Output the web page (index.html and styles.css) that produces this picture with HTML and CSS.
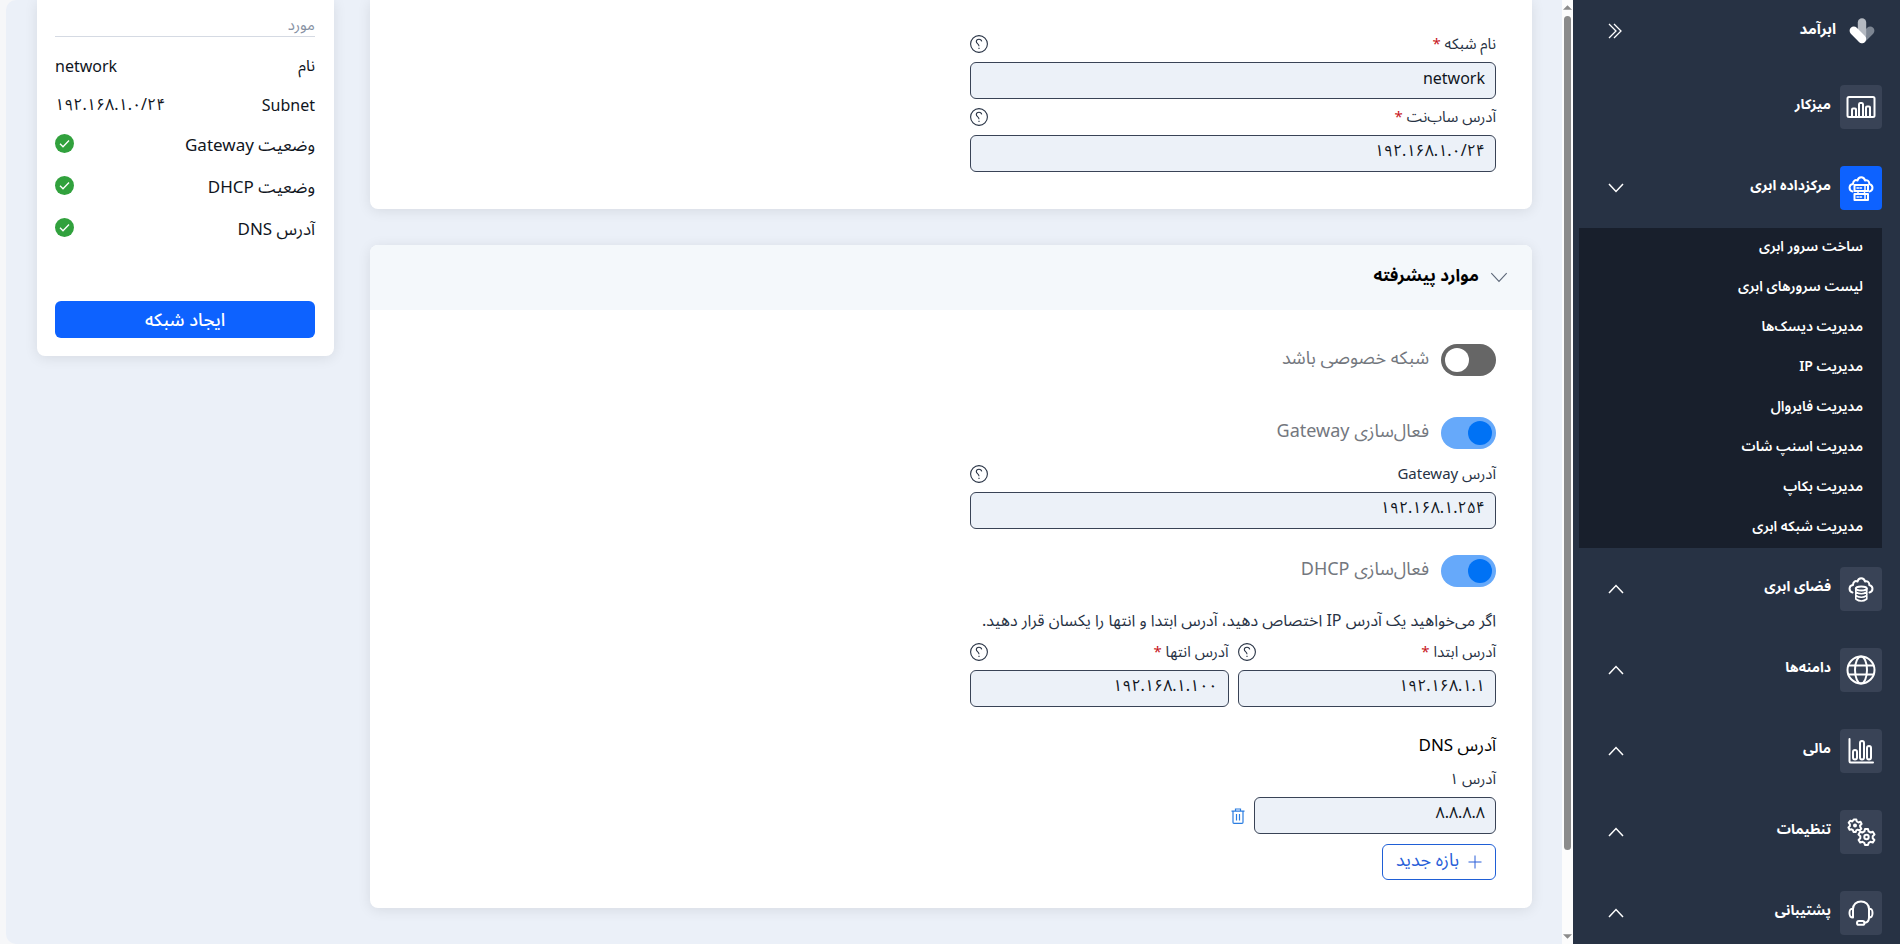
FILE: index.html
```html
<!DOCTYPE html>
<html lang="fa" dir="rtl">
<head>
    <meta charset="UTF-8">
    <meta name="viewport" content="width=device-width, initial-scale=1.0">
    <title>ایجاد شبکه | ابرآمد</title>
    <link rel="stylesheet" href="styles.css">
</head>
<body>
    <!-- shared icons -->
    <svg class="sprite" aria-hidden="true">
        <symbol id="i-help" viewBox="0 0 18 18"><circle cx="9" cy="9" r="8.4"/><path d="M11.7 6.4C11.5 5 10.300 4.200 9 4.200C7.500 4.200 6.300 5.200 6.300 6.600C6.300 8.700 9 8.600 9 11.300M9 12.800V14"/></symbol>
        <symbol id="i-up" viewBox="0 0 16 10"><path d="M1 9L8 1.500L15 9"/></symbol>
        <symbol id="i-down" viewBox="0 0 16 10"><path d="M1 1L8 8.500L15 1"/></symbol>
        <symbol id="i-check" viewBox="0 0 19 19"><circle cx="9.5" cy="9.500" r="9.500" fill="#31a13d"/><path d="M5 9.800L8 12.800L14 6.500" stroke="#fff" stroke-width="1.300"/></symbol>
    </svg>

    <div class="layout">
        <aside class="sidebar">
            <div class="brand">
                <svg class="logo" viewBox="0 0 26 26">
                    <path d="M13 21L21.200 12.800" stroke="#7c8592" stroke-width="8.400" stroke-linecap="round"/>
                    <path d="M13 4.500V17" stroke="#b4b9c1" stroke-width="8.400" stroke-linecap="round"/>
                    <path d="M4.800 12.800L13 21" stroke="#fff" stroke-width="8.400" stroke-linecap="round"/>
                </svg>
                <span class="brand-name">ابرآمد</span>
                <button class="collapse" type="button" aria-label="بستن منو">
                    <svg viewBox="0 0 14 16"><path d="M1 1L8 8L1 15M6 1L13 8L6 15"/></svg>
                </button>
            </div>

            <nav class="menu">
                <a class="menu-item" href="#">
                    <span class="menu-icon">
                        <svg viewBox="0 0 30 30"><rect x="1.500" y="5" width="27" height="20" rx="1.500"/><path d="M6 24V17.500Q6 16.500 7 16.500H9Q10 16.500 10 17.500V24M13 24V12.500Q13 11 14 11H16Q17 11 17 12.500V24M20 24V15.500Q20 14.500 21 14.500H23Q24 14.500 24 15.500V24"/></svg>
                    </span>
                    <span class="menu-text">میزکار</span>
                </a>

                <a class="menu-item active" href="#">
                    <span class="menu-icon">
                        <svg viewBox="0 0 30 30"><path d="M6.500 18.500C2.500 17.500 2.500 11.500 7 11C7 7.500 9.500 6.500 11.500 7.500C12.500 3 18 3 19 7.500C21 6.500 23.500 8 23.300 11C27.500 12 27.500 17.500 23.500 18.500"/><rect x="8.500" y="12" width="13.500" height="6"/><rect x="8.500" y="21" width="13.500" height="6"/><path d="M11 15H12.500M14 15H15.500M19 13V17M11 24H12.500M14 24H15.500M19 22V26M12 18V21M18.500 18V21" stroke-width="1.500"/></svg>
                    </span>
                    <span class="menu-text">مرکزداده ابری</span>
                    <svg class="arrow"><use href="#i-down"/></svg>
                </a>
                <div class="submenu">
                    <a href="#">ساخت سرور ابری</a>
                    <a href="#">لیست سرورهای ابری</a>
                    <a href="#">مدیریت دیسک‌ها</a>
                    <a href="#">مدیریت IP</a>
                    <a href="#">مدیریت فایروال</a>
                    <a href="#">مدیریت اسنپ شات</a>
                    <a href="#">مدیریت بکاپ</a>
                    <a href="#">مدیریت شبکه ابری</a>
                </div>

                <a class="menu-item" href="#">
                    <span class="menu-icon">
                        <svg viewBox="0 0 30 30"><path d="M6.500 18.500C2.500 17.500 2.500 11.500 7 11C7 7.500 9.500 6.500 11.500 7.500C12.500 3 18 3 19 7.500C21 6.500 23.500 8 23.300 11C27.500 12 27.500 17.500 23.500 18.500"/><ellipse cx="15.300" cy="14.500" rx="5.500" ry="2"/><path d="M9.800 14.500V25Q15.300 29 20.800 25V14.500M9.800 18Q15.300 21.500 20.800 18M9.800 21.500Q15.300 25 20.800 21.500" stroke-width="1.600"/></svg>
                    </span>
                    <span class="menu-text">فضای ابری</span>
                    <svg class="arrow"><use href="#i-up"/></svg>
                </a>
                <a class="menu-item" href="#">
                    <span class="menu-icon">
                        <svg viewBox="0 0 30 30"><circle cx="15" cy="15" r="13.500"/><ellipse cx="15" cy="15" rx="6" ry="13.500"/><path d="M2.500 10.500H27.500M2.500 19.500H27.500"/></svg>
                    </span>
                    <span class="menu-text">دامنه‌ها</span>
                    <svg class="arrow"><use href="#i-up"/></svg>
                </a>
                <a class="menu-item" href="#">
                    <span class="menu-icon">
                        <svg viewBox="0 0 30 30"><path d="M3.500 3V25Q3.500 26.500 5 26.500H27"/><rect x="7" y="14" width="4" height="9.500" rx="2"/><rect x="14" y="5" width="4" height="18.500" rx="2"/><rect x="21" y="10" width="4" height="13.500" rx="2"/></svg>
                    </span>
                    <span class="menu-text">مالی</span>
                    <svg class="arrow"><use href="#i-up"/></svg>
                </a>
                <a class="menu-item" href="#">
                    <span class="menu-icon">
                        <svg viewBox="0 0 30 30">
                            <g transform="translate(9 8.500)"><path d="M-1.300 -6H1.300L1.800 -4L3.600 -3L5.500 -3.800L6.600 -1.500L5 0L5.300 1.500L6.300 3.200L4.500 5L2.600 4.200L1.300 4.800L.8 6.500H-1.500L-2.100 4.600L-3.400 3.800L-5.400 4.200L-6.600 2L-5.100 .5V-1.200L-6.300 -2.800L-4.600 -4.800L-2.700 -4Z"/><circle r="1"/></g>
                            <g transform="translate(20.500 20)"><path d="M-1.500 -8H1.500L2.100 -5.600L4.200 -4.500L6.300 -5.200L8 -2.500L6.200 -.8V1.200L7.900 3L6.200 5.600L4 4.800L2.200 5.800L1.500 8H-1.500L-2.200 5.800L-4 4.800L-6.200 5.600L-7.900 3L-6.200 1.200V-.8L-8 -2.500L-6.300 -5.200L-4.200 -4.500L-2.100 -5.600Z"/><circle r="2.200"/></g>
                        </svg>
                    </span>
                    <span class="menu-text">تنظیمات</span>
                    <svg class="arrow"><use href="#i-up"/></svg>
                </a>
                <a class="menu-item" href="#">
                    <span class="menu-icon">
                        <svg viewBox="0 0 30 30"><path d="M7 11C7 6.500 10.500 3.500 15 3.500S23 6.500 23 11M23 19.500C23 23 21.500 24.500 18.500 24.800"/><path d="M7 10.800C4 10.800 3.500 12 3.500 15S4 19.500 7 19.500ZM23 10.800C26 10.800 26.500 12 26.500 15S26 19.500 23 19.500Z"/><rect x="11" y="23" width="7.500" height="3.800" rx="1.900"/></svg>
                    </span>
                    <span class="menu-text">پشتیبانی</span>
                    <svg class="arrow"><use href="#i-up"/></svg>
                </a>
            </nav>
        </aside>

        <div class="scrollbar" aria-hidden="true">
            <svg viewBox="0 0 10 5"><path d="M0 5L5 0L10 5Z"/></svg>
            <div class="track"><div class="thumb"></div></div>
            <svg viewBox="0 0 10 5"><path d="M0 0L5 5L10 0Z"/></svg>
        </div>

        <main class="content">
            <form class="forms" id="network-form">
                <section class="card card-main">
                    <div class="half">
                        <div class="field">
                            <div class="field-head"><label for="name">نام شبکه <b>*</b></label><svg class="help"><use href="#i-help"/></svg></div>
                            <input class="text" id="name" type="text" value="network" dir="ltr">
                        </div>
                        <div class="field">
                            <div class="field-head"><label for="subnet">آدرس ساب‌نت <b>*</b></label><svg class="help"><use href="#i-help"/></svg></div>
                            <input class="text" id="subnet" type="text" value="۱۹۲.۱۶۸.۱.۰/۲۴" dir="ltr">
                        </div>
                    </div>
                </section>

                <section class="card">
                    <header class="card-head">
                        <svg class="head-arrow"><use href="#i-down"/></svg>
                        <h2>موارد پیشرفته</h2>
                    </header>
                    <div class="card-body">
                        <div class="half">
                            <label class="switch-row first"><input class="switch" type="checkbox"><span>شبکه خصوصی باشد</span></label>
                            <label class="switch-row"><input class="switch" type="checkbox" checked><span>فعال‌سازی Gateway</span></label>
                            <div class="field">
                                <div class="field-head"><label for="gateway">آدرس Gateway</label><svg class="help"><use href="#i-help"/></svg></div>
                                <input class="text" id="gateway" type="text" value="۱۹۲.۱۶۸.۱.۲۵۴" dir="ltr">
                            </div>
                            <label class="switch-row dhcp"><input class="switch" type="checkbox" checked><span>فعال‌سازی DHCP</span></label>
                            <p class="note">اگر می‌خواهید یک آدرس IP اختصاص دهید، آدرس ابتدا و انتها را یکسان قرار دهید.</p>
                            <div class="range">
                                <div class="field">
                                    <div class="field-head"><label for="from">آدرس ابتدا <b>*</b></label><svg class="help"><use href="#i-help"/></svg></div>
                                    <input class="text" id="from" type="text" value="۱۹۲.۱۶۸.۱.۱" dir="ltr">
                                </div>
                                <div class="field">
                                    <div class="field-head"><label for="to">آدرس انتها <b>*</b></label><svg class="help"><use href="#i-help"/></svg></div>
                                    <input class="text" id="to" type="text" value="۱۹۲.۱۶۸.۱.۱۰۰" dir="ltr">
                                </div>
                            </div>
                            <h3>آدرس DNS</h3>
                            <div class="field">
                                <div class="field-head"><label for="dns">آدرس ۱</label></div>
                                <div class="dns-row">
                                    <input class="text" id="dns" type="text" value="۸.۸.۸.۸" dir="ltr">
                                    <button class="delete" type="button" aria-label="حذف">
                                        <svg viewBox="0 0 14 16"><path d="M.5 3.200H13.500M4.500 3V1H9.500V3M2 3.500V14.200Q2 15.300 3 15.300H11Q12 15.300 12 14.200V3.500M5.500 6V12.500M8.500 6V12.500"/></svg>
                                    </button>
                                </div>
                            </div>
                            <button class="add" type="button">
                                <svg viewBox="0 0 14 14"><path d="M7 .5V13.500M.5 7H13.500"/></svg>
                                <span>بازه جدید</span>
                            </button>
                        </div>
                    </div>
                </section>
            </form>

            <section class="card summary">
                <div class="summary-title">مورد</div>
                <dl>
                    <div class="row"><dt>نام</dt><dd dir="ltr">network</dd></div>
                    <div class="row"><dt>Subnet</dt><dd dir="ltr">۱۹۲.۱۶۸.۱.۰/۲۴</dd></div>
                    <div class="row status"><dt>وضعیت Gateway</dt><dd><svg class="check"><use href="#i-check"/></svg></dd></div>
                    <div class="row status"><dt>وضعیت DHCP</dt><dd><svg class="check"><use href="#i-check"/></svg></dd></div>
                    <div class="row status"><dt>آدرس DNS</dt><dd><svg class="check"><use href="#i-check"/></svg></dd></div>
                </dl>
                <button class="create" type="submit" form="network-form">ایجاد شبکه</button>
            </section>
        </main>
    </div>
</body>
</html>
```
FILE: styles.css
```css
* {
    box-sizing: border-box;
}
body {
    margin: 0;
    background-color: #f6f7f9;
    color: #10151d;
    font-family: 'Noto Sans', 'Noto Sans Arabic', 'DejaVu Sans', sans-serif;
    font-size: 16px;
}
a {
    color: inherit;
    text-decoration: none;
}
button, input {
    font-family: inherit;
    font-size: 16px;
}
button {
    cursor: pointer;
}
svg {
    display: block;
    flex: none;
    fill: none;
    stroke: currentColor;
}
.sprite {
    position: absolute;
    width: 0;
    height: 0;
}
.layout {
    display: flex;
    height: 100vh;
    overflow: hidden;
}

/* sidebar */
.sidebar {
    flex: 0 0 327px;
    background-color: #273244;
    color: #fff;
    font-weight: 700;
    font-size: 14px;
    overflow: hidden;
}
.brand {
    display: flex;
    align-items: center;
    height: 66px;
    padding: 0 25px 4px 35px;
}
.logo {
    width: 26px;
    height: 26px;
    stroke: none;
}
.brand-name {
    margin-right: 13px;
    padding-bottom: 4px;
    font-size: 15px;
}
.collapse {
    margin-right: auto;
    padding: 0;
    border: none;
    background: none;
    color: #fff;
}
.collapse svg {
    width: 14px;
    height: 16px;
    stroke-width: 1.3;
}
.menu-item {
    display: flex;
    align-items: center;
    height: 81px;
    padding: 0 18px 0 35px;
}
.menu-icon {
    display: flex;
    align-items: center;
    justify-content: center;
    width: 42px;
    height: 44px;
    border-radius: 4px;
    background-color: #394356;
}
.active .menu-icon {
    background-color: #0d62ff;
}
.menu-icon svg {
    width: 30px;
    height: 30px;
    stroke-width: 2;
    stroke-linecap: round;
    stroke-linejoin: round;
}
.menu-text {
    flex: 1;
    margin-right: 9px;
    padding-bottom: 4px;
}
.arrow {
    width: 16px;
    height: 10px;
    stroke-width: 1.5;
}
.submenu {
    display: flex;
    flex-direction: column;
    margin: 0 18px 0 6px;
    padding-right: 19px;
    background-color: #181f2c;
    font-weight: 600;
}
.submenu a {
    height: 40px;
    line-height: 36px;
}

/* scrollbar of the content column */
.scrollbar {
    display: flex;
    flex: 0 0 11px;
    flex-direction: column;
    align-items: center;
    gap: 6px;
    padding: 5px 0;
    background-color: #fcfcfc;
}
.scrollbar svg {
    width: 9px;
    height: 5px;
    fill: #8b8b8b;
    stroke: none;
}
.track {
    flex: 1;
}
.thumb {
    width: 7px;
    height: 91.5%;
    border-radius: 4px;
    background-color: #8b8b8b;
}

/* content */
.content {
    display: flex;
    flex: 1;
    align-items: flex-start;
    gap: 36px;
    min-width: 0;
    margin-left: 6px;
    padding: 0 30px 0 31px;
    border-radius: 0 0 0 10px;
    border-top-left-radius: 10px;
    background-color: #ebf0f8;
}
.forms {
    display: flex;
    flex: 1;
    flex-direction: column;
    gap: 36px;
    min-width: 0;
}
.card {
    border-radius: 8px;
    background-color: #fff;
    box-shadow: 0 2px 14px rgba(0, 0, 0, 0.09);
}
.card-main {
    padding: 26px 36px 37px;
    border-radius: 0 0 8px 8px;
}
.card-head {
    display: flex;
    align-items: center;
    height: 65px;
    padding: 0 24px;
    border-radius: 8px 8px 0 0;
    background-color: #f4f8fb;
}
.head-arrow {
    width: 18px;
    height: 11px;
    color: #5c6778;
}
h2 {
    margin: 0 11px 0 0;
    padding-bottom: 4px;
    color: #000;
    font-size: 17px;
    font-weight: 700;
}
.card-body {
    padding: 34px 36px 28px;
}
.half {
    width: calc(50% - 19px);
}
.field-head {
    display: flex;
    align-items: center;
    justify-content: space-between;
    height: 36px;
    color: #273244;
    font-size: 15px;
}
.field-head b {
    color: #c8161d;
    font-weight: 400;
}
.help {
    width: 18px;
    height: 18px;
    stroke-width: 1.1;
}
.text {
    display: block;
    width: 100%;
    height: 37px;
    padding: 0 10px 6px;
    border: 1px solid #394356;
    border-radius: 6px;
    background-color: #ecf1f8;
    color: #10151d;
    text-align: right;
}
.switch-row {
    display: flex;
    align-items: center;
    gap: 12px;
    width: fit-content;
    height: 32px;
    margin-bottom: 7px;
    color: #73777e;
    font-size: 18px;
}
.switch-row.first {
    margin-bottom: 41px;
}
.switch-row.dhcp {
    margin: 26px 0 19px;
}
.switch-row span {
    padding-bottom: 4px;
}
.switch {
    display: flex;
    align-items: center;
    justify-content: flex-end;
    width: 55px;
    height: 32px;
    margin: 0;
    padding: 0 4px;
    border-radius: 16px;
    background-color: #666;
    appearance: none;
}
.switch::before {
    content: '';
    width: 24px;
    height: 24px;
    border-radius: 50%;
    background-color: #fff;
}
.switch:checked {
    justify-content: flex-start;
    background-color: #66a9fa;
}
.switch:checked::before {
    background-color: #0072f5;
}
.note {
    margin: 0;
    color: #273244;
    font-size: 16px;
    line-height: 28px;
    white-space: nowrap;
}
.range {
    display: grid;
    grid-template-columns: 1fr 1fr;
    gap: 9px;
}
h3 {
    margin: 24px 0 3px;
    color: #000;
    font-size: 17px;
    font-weight: 400;
    line-height: 27px;
}
.dns-row {
    display: flex;
    align-items: center;
    gap: 9px;
}
.dns-row .text {
    width: 46%;
}
.delete {
    padding: 0;
    border: none;
    background: none;
    color: #2a7de1;
}
.delete svg {
    width: 14px;
    height: 16px;
    stroke-width: 1.2;
}
.add {
    display: flex;
    align-items: center;
    gap: 9px;
    height: 36px;
    margin-top: 10px;
    padding: 0 13px;
    border: 1px solid #1f5fd6;
    border-radius: 6px;
    background-color: #fff;
    color: #2a5fd8;
    font-size: 18px;
}
.add svg {
    width: 14px;
    height: 14px;
}
.add span {
    padding-bottom: 4px;
}

/* summary */
.summary {
    flex: 0 0 297px;
    padding: 12px 19px 18px 18px;
    border-radius: 0 0 8px 8px;
}
.summary-title {
    height: 25px;
    border-bottom: 1px solid #d5dae3;
    color: #8791a3;
    font-size: 15px;
    line-height: 24px;
}
dl {
    margin: 9px 0 51px;
}
.row {
    display: flex;
    align-items: center;
    justify-content: space-between;
    height: 39px;
}
.row.status {
    height: 42px;
}
.status dt {
    padding-top: 2px;
    font-size: 17px;
}
dd {
    margin: 0;
}
.status dd {
    padding-bottom: 3px;
}
.check {
    width: 19px;
    height: 19px;
    stroke: none;
}
.create {
    display: block;
    width: 100%;
    height: 37px;
    padding: 0 0 5px;
    border: none;
    border-radius: 6px;
    background-color: #0d62ff;
    color: #fff;
    font-size: 18px;
    font-weight: 500;
}
```
